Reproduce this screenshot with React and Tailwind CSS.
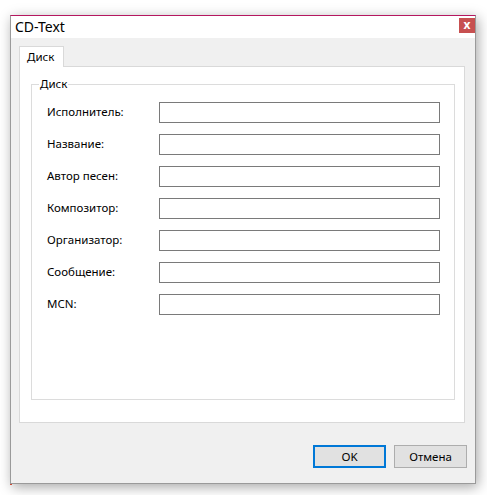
import React from "react";

const fields = [
  "Исполнитель:",
  "Название:",
  "Автор песен:",
  "Композитор:",
  "Организатор:",
  "Сообщение:",
  "MCN:",
];

const App = () => {
  return (
    <div
      className="relative w-[487px] h-[495px] bg-white pt-[15px] pl-[10px] overflow-hidden"
      style={{ fontFamily: '"Noto Sans", "Open Sans", sans-serif' }}
    >
      {/* bit of the window behind */}
      <div className="absolute left-[10px] top-[430px] w-[2px] h-[55px] bg-[#e0533c]" />

      <div className="relative w-[466px] h-[469px] flex flex-col border border-t-[#b5175f] border-x-[#9a9a9a] border-b-[#9a9a9a] bg-[#f0f0f0] shadow-[2px_3px_12px_rgba(0,0,0,0.35)]">
        {/* title bar */}
        <div className="h-[22px] bg-white flex items-start justify-between">
          <span className="pl-[4px] pt-[2px] text-[14px] leading-[18px] text-black">CD-Text</span>
          <div className="mt-[2px] w-[16px] h-[15px] bg-[#c75050] flex items-center justify-center text-white text-[12px] font-bold leading-none pb-px">
            x
          </div>
        </div>

        {/* body */}
        <div className="flex-1 flex flex-col pt-[8px] px-[8px]">
          <div className="flex">
            <div className="relative z-10 w-[45px] h-[21px] -mb-px bg-white border border-b-0 border-[#d9d9d9] pl-[7px] text-[11.5px] leading-[20px] text-black">
              Диск
            </div>
          </div>
          <div className="h-[357px] w-[446px] bg-white border border-[#d9d9d9] pt-[17px] pl-[11px] pr-[9px]">
            <div className="relative h-[316px] border border-[#dcdcdc] pt-[17px] pl-[15px] pr-[14px]">
              <span className="absolute left-[7px] -top-[9px] bg-white px-px text-[11.5px] leading-[16px] text-black">
                Диск
              </span>
              <div className="flex flex-col gap-[11px]">
                {fields.map((f) => (
                  <div key={f} className="flex items-center">
                    <label className="w-[112px] text-[11.5px] text-black leading-[16px] -mt-[2px]">
                      {f}
                    </label>
                    <div className="flex-1 h-[21px] border border-[#7a7a7a] bg-white" />
                  </div>
                ))}
              </div>
            </div>
          </div>

          <div className="flex justify-end gap-[8px] mt-[22px]">
            <button className="w-[73px] h-[23px] bg-[#e1e1e1] border-2 border-[#0078d7] text-[11.5px] text-black leading-none">
              OK
            </button>
            <button className="w-[73px] h-[23px] bg-[#e1e1e1] border border-[#adadad] text-[11.5px] text-black leading-none">
              Отмена
            </button>
          </div>
        </div>
      </div>
    </div>
  );
};

export default App;
